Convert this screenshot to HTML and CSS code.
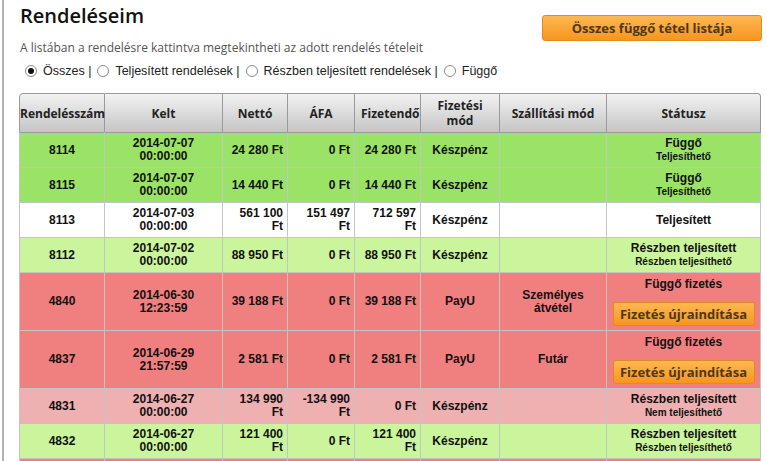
FILE: index.html
```html
<!DOCTYPE html>
<html lang="hu">
<head>
<meta charset="utf-8">
<title>Rendeléseim</title>
<link rel="stylesheet" href="styles.css">
</head>
<body>
<div class="page">
  <div class="top">
    <div class="intro">
      <h1 class="title">Rendeléseim</h1>
      <p class="desc">A listában a rendelésre kattintva megtekintheti az adott rendelés tételeit</p>
      <div class="filters">
        <label class="filter"><input type="radio" name="f" checked> Összes |</label>
        <label class="filter"><input type="radio" name="f"> Teljesített rendelések |</label>
        <label class="filter"><input type="radio" name="f"> Részben teljesített rendelések |</label>
        <label class="filter"><input type="radio" name="f"> Függő</label>
      </div>
    </div>
    <button class="btn btn-top">Összes függő tétel listája</button>
  </div>

  <table class="orders">
    <colgroup>
      <col class="c1"><col class="c2"><col class="c3"><col class="c4"><col class="c5"><col class="c6"><col class="c7"><col class="c8">
    </colgroup>
    <thead>
      <tr>
        <th>Rendelésszám</th><th>Kelt</th><th>Nettó</th><th>ÁFA</th><th>Fizetendő</th><th>Fizetési mód</th><th>Szállítási mód</th><th>Státusz</th>
      </tr>
    </thead>
    <tbody>
      <tr class="green">
        <td>8114</td><td>2014-07-07<br>00:00:00</td><td class="num">24&nbsp;280 Ft</td><td class="num">0 Ft</td><td class="num">24&nbsp;280 Ft</td><td>Készpénz</td><td></td>
        <td>Függő<br><span class="sub">Teljesíthető</span></td>
      </tr>
      <tr class="green">
        <td>8115</td><td>2014-07-07<br>00:00:00</td><td class="num">14&nbsp;440 Ft</td><td class="num">0 Ft</td><td class="num">14&nbsp;440 Ft</td><td>Készpénz</td><td></td>
        <td>Függő<br><span class="sub">Teljesíthető</span></td>
      </tr>
      <tr class="white">
        <td>8113</td><td>2014-07-03<br>00:00:00</td><td class="num">561&nbsp;100 Ft</td><td class="num">151&nbsp;497 Ft</td><td class="num">712&nbsp;597 Ft</td><td>Készpénz</td><td></td>
        <td>Teljesített</td>
      </tr>
      <tr class="light">
        <td>8112</td><td>2014-07-02<br>00:00:00</td><td class="num">88&nbsp;950 Ft</td><td class="num">0 Ft</td><td class="num">88&nbsp;950 Ft</td><td>Készpénz</td><td></td>
        <td>Részben teljesített<br><span class="sub">Részben teljesíthető</span></td>
      </tr>
      <tr class="red">
        <td>4840</td><td>2014-06-30<br>12:23:59</td><td class="num">39&nbsp;188 Ft</td><td class="num">0 Ft</td><td class="num">39&nbsp;188 Ft</td><td>PayU</td><td>Személyes<br>átvétel</td>
        <td><div class="pay">Függő fizetés</div><button class="btn btn-pay">Fizetés újraindítása</button></td>
      </tr>
      <tr class="red">
        <td>4837</td><td>2014-06-29<br>21:57:59</td><td class="num">2&nbsp;581 Ft</td><td class="num">0 Ft</td><td class="num">2&nbsp;581 Ft</td><td>PayU</td><td>Futár</td>
        <td><div class="pay">Függő fizetés</div><button class="btn btn-pay">Fizetés újraindítása</button></td>
      </tr>
      <tr class="pink">
        <td>4831</td><td>2014-06-27<br>00:00:00</td><td class="num">134&nbsp;990 Ft</td><td class="num">-134&nbsp;990 Ft</td><td class="num">0 Ft</td><td>Készpénz</td><td></td>
        <td>Részben teljesített<br><span class="sub">Nem teljesíthető</span></td>
      </tr>
      <tr class="light">
        <td>4832</td><td>2014-06-27<br>00:00:00</td><td class="num">121&nbsp;400 Ft</td><td class="num">0 Ft</td><td class="num">121&nbsp;400 Ft</td><td>Készpénz</td><td></td>
        <td>Részben teljesített<br><span class="sub">Részben teljesíthető</span></td>
      </tr>
      <tr class="red">
        <td>4829</td><td>2014-06-26<br>10:12:41</td><td class="num">9&nbsp;990 Ft</td><td class="num">0 Ft</td><td class="num">9&nbsp;990 Ft</td><td>PayU</td><td>Futár</td>
        <td><div class="pay">Függő fizetés</div><button class="btn btn-pay">Fizetés újraindítása</button></td>
      </tr>
    </tbody>
  </table>
</div>
</body>
</html>
```

FILE: styles.css
```css
html, body {
  margin: 0;
  padding: 0;
  background: #fff;
}

.page {
  margin-left: 2px;
  border-left: 2px solid #b4b4b4;
  min-height: 100vh;
  padding: 0 6px 20px 15px;
  box-sizing: border-box;
  font-family: "Liberation Sans", Arial, sans-serif;
  color: #111;
}

.top {
  display: flex;
  justify-content: space-between;
  align-items: flex-start;
}

.title {
  margin: 2px 0 0 1px;
  font-family: "Open Sans", sans-serif;
  font-weight: 600;
  font-size: 20px;
  line-height: 28px;
  color: #111;
}

.desc {
  margin: 10px 0 0 1px;
  font-family: "Open Sans", sans-serif;
  font-size: 12px;
  line-height: 16px;
  color: #555;
}

.filters {
  display: flex;
  margin-top: 7px;
  height: 16px;
  align-items: center;
  font-size: 12.5px;
  color: #222;
}

.filter {
  display: inline-flex;
  align-items: center;
  gap: 6px;
  margin-left: 6px;
  margin-right: 0;
}

.filter:first-child {
  margin-left: 6px;
}

.filter input {
  appearance: none;
  -webkit-appearance: none;
  width: 12px;
  height: 12px;
  margin: 0;
  border: 1px solid #8a8a8a;
  border-radius: 50%;
  background: #fff;
  box-sizing: border-box;
  position: relative;
}

.filter input:checked::after {
  content: "";
  position: absolute;
  left: 2px;
  top: 2px;
  width: 6px;
  height: 6px;
  border-radius: 50%;
  background: #111;
}

.btn {
  font-family: "Open Sans", sans-serif;
  font-weight: 700;
  color: #4e3818;
  background: linear-gradient(#fdb852, #f7951f);
  border: 1px solid #e08a22;
  border-radius: 3px;
  cursor: pointer;
  padding: 0;
}

.btn-top {
  margin-top: 15px;
  margin-right: -1px;
  width: 220px;
  height: 26px;
  font-size: 13px;
}

.orders {
  margin-top: 14px;
  width: 742px;
  table-layout: fixed;
  border-collapse: separate;
  border-spacing: 0;
  font-size: 12px;
}

.c1 { width: 86px; }
.c2 { width: 118px; }
.c3 { width: 65px; }
.c4 { width: 67px; }
.c5 { width: 66px; }
.c6 { width: 79px; }
.c7 { width: 107px; }
.c8 { width: 154px; }

.orders th {
  font-family: "Open Sans", sans-serif;
  font-weight: 700;
  font-size: 12px;
  line-height: 15px;
  color: #222;
  padding: 4px 6px;
  height: 29px;
  background: linear-gradient(#f2f2f2, #c5c5c5);
  border-top: 1px solid #9a9a9a;
  border-right: 1px solid #9a9a9a;
  border-bottom: 1px solid #9a9a9a;
  text-align: center;
  vertical-align: middle;
}

.orders th:first-child {
  padding: 4px 0;
  border-left: 1px solid #9a9a9a;
  border-top-left-radius: 4px;
}

.orders th:last-child {
  border-top-right-radius: 4px;
}

.orders td {
  font-weight: 700;
  line-height: 13px;
  padding: 4px 4px;
  height: 26px;
  text-align: center;
  vertical-align: middle;
  border-right: 1px solid #c4c4c4;
  border-bottom: 1px solid #c4c4c4;
}

.orders td:first-child {
  border-left: 1px solid #c4c4c4;
}

.orders td.num {
  text-align: right;
}

.sub {
  font-size: 10px;
  line-height: 12px;
}

.green td { background: #9be366; }
.light td { background: #cbf59d; }
.white td { background: #ffffff; }
.red td { background: #f07f7f; }
.pink td { background: #eeb0b0; }

.pay {
  line-height: 15px;
  margin-bottom: 10px;
}

.btn-pay {
  display: block;
  margin: 0 auto;
  width: 142px;
  height: 24px;
  font-size: 13px;
}
```
